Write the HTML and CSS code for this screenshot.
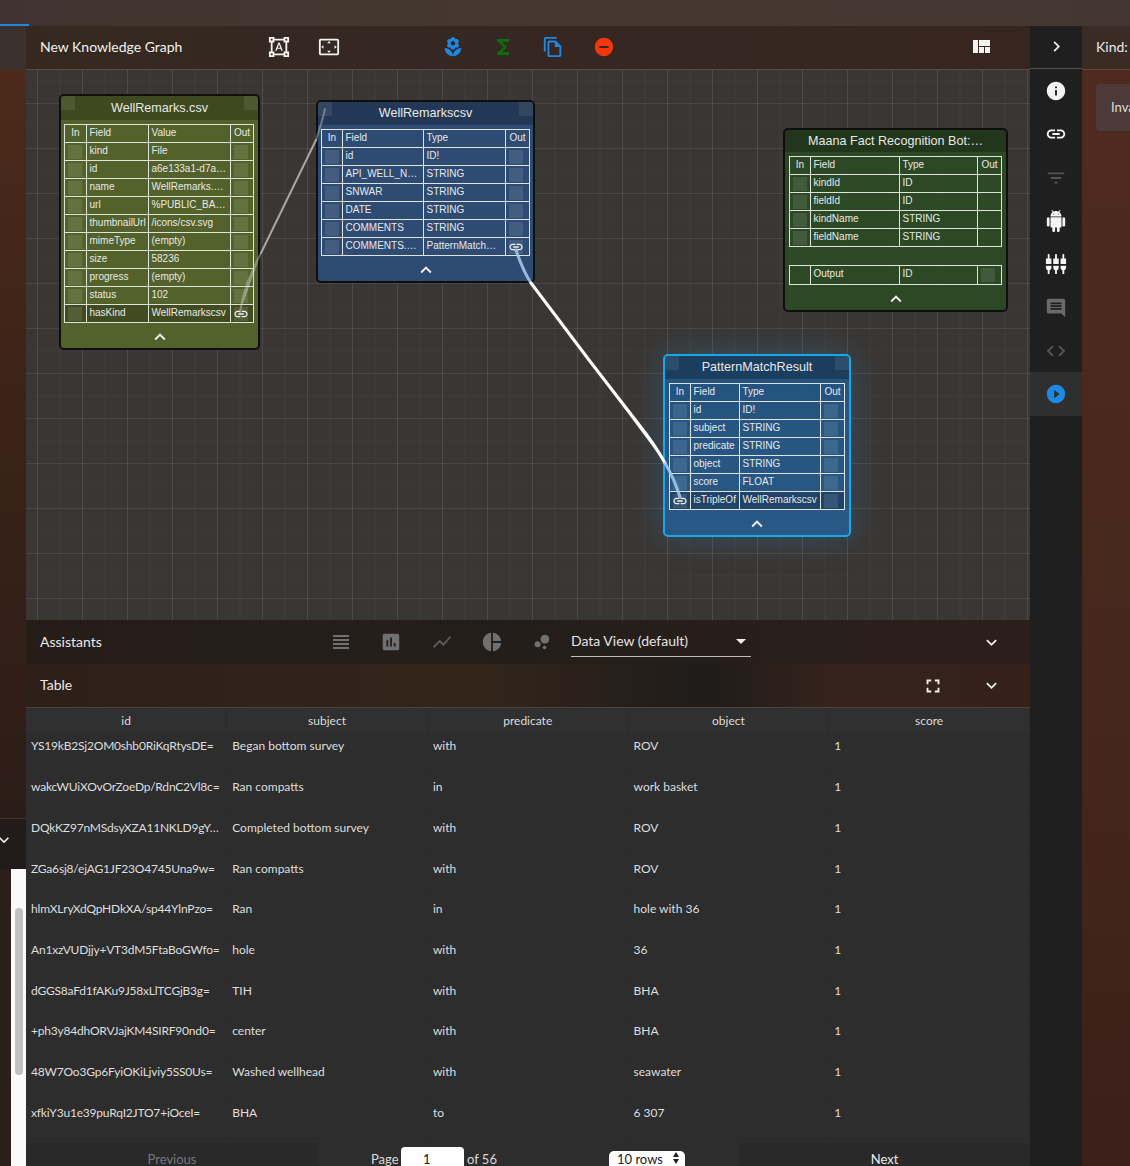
FILE: index.html
```html
<!DOCTYPE html>
<html lang="en">
<head>
    <meta charset="UTF-8">
    <meta name="viewport" content="width=device-width, initial-scale=1.0">
    <title>New Knowledge Graph</title>
    <link rel="stylesheet" href="styles.css">
</head>
<body>
    <svg class="icon-defs" width="0" height="0">
        <symbol id="i-shapes" viewBox="0 0 24 24"><path d="M23 7V1h-6v2H7V1H1v6h2v10H1v6h6v-2h10v2h6v-6h-2V7h2zM3 3h2v2H3V3zm2 18H3v-2h2v2zm12-2H7v-2H5V7h2V5h10v2h2v10h-2v2zm4 2h-2v-2h2v2zM19 5V3h2v2h-2zm-5.27 9h-3.49l-.73 2H7.89l3.4-9h1.4l3.41 9h-1.63l-.74-2zm-3.04-1.26h2.61L12 8.91l-1.31 3.83z"/></symbol>
        <symbol id="i-overscan" viewBox="0 0 24 24"><path d="M12.01 5.5L10 8h4l-1.99-2.5zM18 10v4l2.5-1.99L18 10zM6 10l-2.5 2.01L6 14v-4zm8 6h-4l2.01 2.5L14 16zm7-13H3c-1.1 0-2 .9-2 2v14c0 1.1.9 2 2 2h18c1.1 0 2-.9 2-2V5c0-1.1-.9-2-2-2zm0 16.01H3V4.99h18v14.02z"/></symbol>
        <symbol id="i-florist" viewBox="0 0 24 24"><path d="M12 22c4.97 0 9-4.03 9-9-4.97 0-9 4.03-9 9zM5.6 10.25c0 1.38 1.12 2.5 2.5 2.5.53 0 1.01-.16 1.42-.44l-.02.19c0 1.38 1.12 2.5 2.5 2.5s2.5-1.12 2.5-2.5l-.02-.19c.4.28.89.44 1.42.44 1.38 0 2.5-1.12 2.5-2.5 0-1-.59-1.85-1.43-2.25.84-.4 1.43-1.25 1.43-2.25 0-1.38-1.12-2.5-2.5-2.5-.53 0-1.01.16-1.42.44l.02-.19C14.5 2.12 13.38 1 12 1S9.5 2.12 9.5 3.5l.02.19c-.4-.28-.89-.44-1.42-.44-1.38 0-2.5 1.12-2.5 2.5 0 1 .59 1.85 1.43 2.25-.84.4-1.43 1.25-1.43 2.25zM12 5.5c1.38 0 2.5 1.12 2.5 2.5s-1.12 2.5-2.5 2.5S9.5 9.38 9.5 8s1.12-2.5 2.5-2.5zM3 13c0 4.97 4.03 9 9 9 0-4.97-4.03-9-9-9z"/></symbol>
        <symbol id="i-sigma" viewBox="0 0 24 24"><path d="M18 4H6v2l6.5 6L6 18v2h12v-3h-7l5-5-5-5h7z"/></symbol>
        <symbol id="i-copy" viewBox="0 0 24 24"><path d="M16 1H4c-1.1 0-2 .9-2 2v14h2V3h12V1zm-1 4H8c-1.1 0-1.99.9-1.99 2L6 21c0 1.1.89 2 1.99 2H19c1.1 0 2-.9 2-2V11l-6-6zM8 21V7h6v5h5v9H8z"/></symbol>
        <symbol id="i-remove" viewBox="0 0 24 24"><path d="M12 2C6.48 2 2 6.48 2 12s4.48 10 10 10 10-4.48 10-10S17.52 2 12 2zm5 11H7v-2h10v2z"/></symbol>
        <symbol id="i-quilt" viewBox="0 0 24 24"><path d="M10 18h5v-6h-5v6zm-6 0h5V5H4v13zm12 0h5v-6h-5v6zM10 5v6h11V5H10z"/></symbol>
        <symbol id="i-right" viewBox="0 0 24 24"><path d="M10 6L8.59 7.41 13.17 12l-4.58 4.59L10 18l6-6z"/></symbol>
        <symbol id="i-info" viewBox="0 0 24 24"><path d="M12 2C6.48 2 2 6.48 2 12s4.48 10 10 10 10-4.48 10-10S17.52 2 12 2zm1 15h-2v-6h2v6zm0-8h-2V7h2v2z"/></symbol>
        <symbol id="i-link" viewBox="0 0 24 24"><path d="M3.9 12c0-1.71 1.39-3.1 3.1-3.1h4V7H7c-2.76 0-5 2.24-5 5s2.24 5 5 5h4v-1.9H7c-1.71 0-3.1-1.39-3.1-3.1zM8 13h8v-2H8v2zm9-6h-4v1.9h4c1.71 0 3.1 1.39 3.1 3.1s-1.39 3.1-3.1 3.1h-4V17h4c2.76 0 5-2.24 5-5s-2.24-5-5-5z"/></symbol>
        <symbol id="i-filter" viewBox="0 0 24 24"><path d="M10 18h4v-2h-4v2zM3 6v2h18V6H3zm3 7h12v-2H6v2z"/></symbol>
        <symbol id="i-android" viewBox="0 0 24 24"><path d="M6 18c0 .55.45 1 1 1h1v3.5c0 .83.67 1.5 1.5 1.5s1.5-.67 1.5-1.5V19h2v3.5c0 .83.67 1.5 1.5 1.5s1.5-.67 1.5-1.5V19h1c.55 0 1-.45 1-1V8H6v10zM3.5 8C2.67 8 2 8.67 2 9.5v7c0 .83.67 1.5 1.5 1.5S5 17.33 5 16.5v-7C5 8.67 4.33 8 3.5 8zm17 0c-.83 0-1.5.67-1.5 1.5v7c0 .83.67 1.5 1.5 1.5s1.5-.67 1.5-1.5v-7c0-.83-.67-1.5-1.5-1.5zm-4.97-5.84l1.3-1.3c.2-.2.2-.51 0-.71-.2-.2-.51-.2-.71 0l-1.48 1.48C13.85 1.23 12.95 1 12 1c-.96 0-1.86.23-2.66.63L7.85.15c-.2-.2-.51-.2-.71 0-.2.2-.2.51 0 .71l1.31 1.31C6.97 3.26 6 5.01 6 7h12c0-1.99-.97-3.75-2.47-4.84zM10 5H9V4h1v1zm5 0h-1V4h1v1z"/></symbol>
        <symbol id="i-inputs" viewBox="0 0 24 24"><path d="M5 2c0-.55-.45-1-1-1s-1 .45-1 1v4H1v6h6V6H5V2zm4 14c0 1.3.84 2.4 2 2.82V23h2v-4.18c1.16-.41 2-1.51 2-2.82v-2H9v2zm-8 0c0 1.3.84 2.4 2 2.82V23h2v-4.18C6.16 18.4 7 17.3 7 16v-2H1v2zM21 6V2c0-.55-.45-1-1-1s-1 .45-1 1v4H17v6h6V6h-2zm-8-4c0-.55-.45-1-1-1s-1 .45-1 1v4H9v6h6V6h-2V2zm4 14c0 1.3.84 2.4 2 2.82V23h2v-4.18c1.16-.41 2-1.51 2-2.82v-2h-6v2z"/></symbol>
        <symbol id="i-comment" viewBox="0 0 24 24"><path d="M21.99 4c0-1.1-.89-2-1.99-2H4c-1.1 0-2 .9-2 2v12c0 1.1.9 2 2 2h14l4 4-.01-18zM18 14H6v-2h12v2zm0-3H6V9h12v2zm0-3H6V6h12v2z"/></symbol>
        <symbol id="i-code" viewBox="0 0 24 24"><path d="M9.4 16.6L4.8 12l4.6-4.6L8 6l-6 6 6 6 1.4-1.4zm5.2 0l4.6-4.6-4.6-4.6L16 6l6 6-6 6-1.4-1.4z"/></symbol>
        <symbol id="i-play" viewBox="0 0 24 24"><path d="M12 2C6.48 2 2 6.48 2 12s4.48 10 10 10 10-4.48 10-10S17.52 2 12 2zm-2 14.5v-9l6 4.5-6 4.5z"/></symbol>
        <symbol id="i-headline" viewBox="0 0 24 24"><path d="M4 15h16v-2H4v2zm0 4h16v-2H4v2zm0-8h16V9H4v2zm0-6v2h16V5H4z"/></symbol>
        <symbol id="i-bars" viewBox="0 0 24 24"><path d="M19 3H5c-1.1 0-2 .9-2 2v14c0 1.1.9 2 2 2h14c1.1 0 2-.9 2-2V5c0-1.1-.9-2-2-2zM9 17H7v-7h2v7zm4 0h-2V7h2v10zm4 0h-2v-4h2v4z"/></symbol>
        <symbol id="i-line" viewBox="0 0 24 24"><path d="M3.5 18.49l6-6.01 4 4L22 6.92l-1.41-1.41-7.09 7.97-4-4L2 16.99z"/></symbol>
        <symbol id="i-pie" viewBox="0 0 24 24"><path d="M11 2v20c-5.07-.5-9-4.79-9-10s3.93-9.5 9-10zm2.03 0v8.99H22c-.47-4.74-4.24-8.52-8.97-8.99zm0 11.01V22c4.74-.47 8.5-4.25 8.97-8.99h-8.97z"/></symbol>
        <symbol id="i-bubble" viewBox="0 0 24 24"><circle cx="7.2" cy="14.4" r="3.2"/><circle cx="14.8" cy="18" r="2"/><circle cx="15.2" cy="8.8" r="4.8"/></symbol>
        <symbol id="i-full" viewBox="0 0 24 24"><path d="M7 14H5v5h5v-2H7v-3zm-2-4h2V7h3V5H5v5zm12 7h-3v2h5v-5h-2v3zM14 5v2h3v3h2V5h-5z"/></symbol>
        <symbol id="i-down" viewBox="0 0 24 24"><path d="M16.59 8.59L12 13.17 7.41 8.59 6 10l6 6 6-6z"/></symbol>
        <symbol id="i-up" viewBox="0 0 24 24"><path d="M12 8l-6 6 1.41 1.41L12 10.83l4.59 4.58L18 14z"/></symbol>
    </svg>

    <div class="topbar"><div class="topbar-tab"></div></div>

    <div class="app">
        <aside class="left-strip">
            <div class="left-head"></div>
            <div class="left-brown"></div>
            <div class="left-band"><svg class="left-chevron"><use href="#i-down"/></svg></div>
            <div class="left-scroll"><div class="left-thumb"></div></div>
        </aside>

        <main class="main">
            <header class="graph-head">
                <div class="graph-title">New Knowledge Graph</div>
                <div class="btn-group">
                    <span class="icon-btn"><svg><use href="#i-shapes"/></svg></span>
                    <span class="icon-btn"><svg><use href="#i-overscan"/></svg></span>
                </div>
                <div class="btn-group group-actions">
                    <span class="icon-btn blue"><svg><use href="#i-florist"/></svg></span>
                    <span class="icon-btn green"><svg><use href="#i-sigma"/></svg></span>
                    <span class="icon-btn blue"><svg><use href="#i-copy"/></svg></span>
                    <span class="icon-btn red"><svg><use href="#i-remove"/></svg></span>
                </div>
                <div class="btn-group group-layout">
                    <span class="icon-btn"><svg><use href="#i-quilt"/></svg></span>
                </div>
            </header>

            <section class="canvas">
                <div class="node node-file">
                    <div class="node-title"><span class="corner corner-l"></span>WellRemarks.csv<span class="corner corner-r"></span></div>
                    <table class="fields">
                        <colgroup><col class="c1"><col class="c2"><col class="c3"><col class="c4"></colgroup>
                        <tr><th class="center">In</th><th>Field</th><th>Value</th><th class="center">Out</th></tr>
                        <tr><td><i class="port"></i></td><td>kind</td><td>File</td><td><i class="port"></i></td></tr>
                        <tr><td><i class="port"></i></td><td>id</td><td>a6e133a1-d7a…</td><td><i class="port"></i></td></tr>
                        <tr><td><i class="port"></i></td><td>name</td><td>WellRemarks.…</td><td><i class="port"></i></td></tr>
                        <tr><td><i class="port"></i></td><td>url</td><td>%PUBLIC_BA…</td><td><i class="port"></i></td></tr>
                        <tr><td><i class="port"></i></td><td>thumbnailUrl</td><td>/icons/csv.svg</td><td><i class="port"></i></td></tr>
                        <tr><td><i class="port"></i></td><td>mimeType</td><td>(empty)</td><td><i class="port"></i></td></tr>
                        <tr><td><i class="port"></i></td><td>size</td><td>58236</td><td><i class="port"></i></td></tr>
                        <tr><td><i class="port"></i></td><td>progress</td><td>(empty)</td><td><i class="port"></i></td></tr>
                        <tr><td><i class="port"></i></td><td>status</td><td>102</td><td><i class="port"></i></td></tr>
                        <tr class="linked"><td><i class="port"></i></td><td>hasKind</td><td>WellRemarkscsv</td><td><i class="port"><svg><use href="#i-link"/></svg></i></td></tr>
                    </table>
                    <div class="node-foot"><svg><use href="#i-up"/></svg></div>
                </div>

                <div class="node node-kind">
                    <div class="node-title"><span class="corner corner-l"></span>WellRemarkscsv<span class="corner corner-r"></span></div>
                    <table class="fields">
                        <colgroup><col class="c1"><col class="c2"><col class="c3"><col class="c4"></colgroup>
                        <tr><th class="center">In</th><th>Field</th><th>Type</th><th class="center">Out</th></tr>
                        <tr><td><i class="port"></i></td><td>id</td><td>ID!</td><td><i class="port"></i></td></tr>
                        <tr><td><i class="port"></i></td><td>API_WELL_N…</td><td>STRING</td><td><i class="port"></i></td></tr>
                        <tr><td><i class="port"></i></td><td>SNWAR</td><td>STRING</td><td><i class="port"></i></td></tr>
                        <tr><td><i class="port"></i></td><td>DATE</td><td>STRING</td><td><i class="port"></i></td></tr>
                        <tr><td><i class="port"></i></td><td>COMMENTS</td><td>STRING</td><td><i class="port"></i></td></tr>
                        <tr><td><i class="port"></i></td><td>COMMENTS.…</td><td>PatternMatch…</td><td><i class="port"><svg><use href="#i-link"/></svg></i></td></tr>
                    </table>
                    <div class="node-foot"><svg><use href="#i-up"/></svg></div>
                </div>

                <div class="node node-bot">
                    <div class="node-title">Maana Fact Recognition Bot:…</div>
                    <table class="fields">
                        <colgroup><col class="c1"><col class="c2"><col class="c3"><col class="c4"></colgroup>
                        <tr><th class="center">In</th><th>Field</th><th>Type</th><th class="center">Out</th></tr>
                        <tr><td><i class="port"></i></td><td>kindId</td><td>ID</td><td></td></tr>
                        <tr><td><i class="port"></i></td><td>fieldId</td><td>ID</td><td></td></tr>
                        <tr><td><i class="port"></i></td><td>kindName</td><td>STRING</td><td></td></tr>
                        <tr><td><i class="port"></i></td><td>fieldName</td><td>STRING</td><td></td></tr>
                    </table>
                    <table class="fields fields-output">
                        <colgroup><col class="c1"><col class="c2"><col class="c3"><col class="c4"></colgroup>
                        <tr><td></td><td>Output</td><td>ID</td><td><i class="port"></i></td></tr>
                    </table>
                    <div class="node-foot"><svg><use href="#i-up"/></svg></div>
                </div>

                <div class="node node-result">
                    <div class="node-title"><span class="corner corner-l"></span>PatternMatchResult<span class="corner corner-r"></span></div>
                    <table class="fields">
                        <colgroup><col class="c1"><col class="c2"><col class="c3"><col class="c4"></colgroup>
                        <tr><th class="center">In</th><th>Field</th><th>Type</th><th class="center">Out</th></tr>
                        <tr><td><i class="port"></i></td><td>id</td><td>ID!</td><td><i class="port"></i></td></tr>
                        <tr><td><i class="port"></i></td><td>subject</td><td>STRING</td><td><i class="port"></i></td></tr>
                        <tr><td><i class="port"></i></td><td>predicate</td><td>STRING</td><td><i class="port"></i></td></tr>
                        <tr><td><i class="port"></i></td><td>object</td><td>STRING</td><td><i class="port"></i></td></tr>
                        <tr><td><i class="port"></i></td><td>score</td><td>FLOAT</td><td><i class="port"></i></td></tr>
                        <tr class="linked"><td><i class="port"><svg><use href="#i-link"/></svg></i></td><td>isTripleOf</td><td>WellRemarkscsv</td><td><i class="port"></i></td></tr>
                    </table>
                    <div class="node-foot"><svg><use href="#i-up"/></svg></div>
                </div>

                <svg class="edges" width="1004" height="550" viewBox="26 70 1004 550" fill="none">
                    <path class="edge-grey-dim" d="M240 312C243 292 248 278 261 253"/>
                    <path class="edge-grey" d="M261 253L316 140"/>
                    <path class="edge-grey-dim" d="M316 140C320 128 323 118 325 109"/>
                    <path class="edge-blue-dim" d="M516 250C520 262 525 274 531 283"/>
                    <path class="edge-white" d="M531 283L589 360L640 426Q655 445 665 463"/>
                    <path class="edge-blue-dim" d="M665 463Q674 478 680 497"/>
                </svg>
            </section>

            <section class="bar bar-assist">
                <div class="bar-label">Assistants</div>
                <div class="btn-group group-views">
                    <span class="icon-btn grey"><svg><use href="#i-headline"/></svg></span>
                    <span class="icon-btn grey"><svg><use href="#i-bars"/></svg></span>
                    <span class="icon-btn dim"><svg><use href="#i-line"/></svg></span>
                    <span class="icon-btn grey"><svg><use href="#i-pie"/></svg></span>
                    <span class="icon-btn grey"><svg><use href="#i-bubble"/></svg></span>
                </div>
                <div class="view-select">Data View (default)<span class="caret"></span></div>
                <span class="icon-btn bar-end"><svg><use href="#i-down"/></svg></span>
            </section>

            <section class="bar bar-table">
                <div class="bar-label">Table</div>
                <span class="icon-btn bar-full"><svg><use href="#i-full"/></svg></span>
                <span class="icon-btn bar-end"><svg><use href="#i-down"/></svg></span>
            </section>

            <section class="results">
                <table class="data">
                    <thead>
                        <tr><th>id</th><th>subject</th><th>predicate</th><th>object</th><th>score</th></tr>
                    </thead>
                    <tbody>
                        <tr><td>YS19kB2Sj2OM0shb0RiKqRtysDE=</td><td>Began bottom survey</td><td>with</td><td>ROV</td><td>1</td></tr>
                        <tr><td>wakcWUiXOvOrZoeDp/RdnC2Vl8c=</td><td>Ran compatts</td><td>in</td><td>work basket</td><td>1</td></tr>
                        <tr><td>DQkKZ97nMSdsyXZA11NKLD9gY…</td><td>Completed bottom survey</td><td>with</td><td>ROV</td><td>1</td></tr>
                        <tr><td>ZGa6sj8/ejAG1JF23O4745Una9w=</td><td>Ran compatts</td><td>with</td><td>ROV</td><td>1</td></tr>
                        <tr><td>hlmXLryXdQpHDkXA/sp44YlnPzo=</td><td>Ran</td><td>in</td><td>hole with 36</td><td>1</td></tr>
                        <tr><td>An1xzVUDjjy+VT3dM5FtaBoGWfo=</td><td>hole</td><td>with</td><td>36</td><td>1</td></tr>
                        <tr><td>dGGS8aFd1fAKu9J58xLlTCGjB3g=</td><td>TIH</td><td>with</td><td>BHA</td><td>1</td></tr>
                        <tr><td>+ph3y84dhORVJajKM4SIRF90nd0=</td><td>center</td><td>with</td><td>BHA</td><td>1</td></tr>
                        <tr><td>48W7Oo3Gp6FyiOKiLjviy5SS0Us=</td><td>Washed wellhead</td><td>with</td><td>seawater</td><td>1</td></tr>
                        <tr><td>xfkiY3u1e39puRqI2JTO7+iOceI=</td><td>BHA</td><td>to</td><td>6 307</td><td>1</td></tr>
                    </tbody>
                </table>
                <div class="pager">
                    <div class="pager-btn pager-prev">Previous</div>
                    <div class="pager-mid">
                        <span class="pager-page">Page</span>
                        <span class="pager-input">1</span>
                        <span class="pager-of">of 56</span>
                        <span class="pager-rows">10 rows<span class="updown"></span></span>
                    </div>
                    <div class="pager-btn">Next</div>
                </div>
            </section>
        </main>

        <nav class="rail">
            <div class="rail-head"><svg><use href="#i-right"/></svg></div>
            <span class="rail-item"><svg><use href="#i-info"/></svg></span>
            <span class="rail-item"><svg><use href="#i-link"/></svg></span>
            <span class="rail-item off"><svg><use href="#i-filter"/></svg></span>
            <span class="rail-item"><svg><use href="#i-android"/></svg></span>
            <span class="rail-item"><svg><use href="#i-inputs"/></svg></span>
            <span class="rail-item mid"><svg><use href="#i-comment"/></svg></span>
            <span class="rail-item off"><svg><use href="#i-code"/></svg></span>
            <span class="rail-item active"><svg><use href="#i-play"/></svg></span>
        </nav>

        <aside class="details">
            <div class="details-head">Kind:</div>
            <div class="details-card">Inva</div>
        </aside>
    </div>
</body>
</html>
```
FILE: styles.css
```css
* {
    box-sizing: border-box;
}
html, body {
    margin: 0;
    height: 1166px;
    overflow: hidden;
}
body {
    font-family: Lato, "Noto Sans", sans-serif;
    color: #e6e6e6;
    background: #2a1f1b;
}
.icon-defs {
    position: absolute;
}
svg {
    fill: currentColor;
}
.topbar {
    height: 26px;
    background: linear-gradient(to right, #3f3430, #46382f 50%, #443632);
}
.topbar-tab {
    width: 29px;
    height: 26px;
    border-bottom: 2px solid #1e88e5;
}
.app {
    display: grid;
    grid-template-columns: 26px 1004px 52px 48px;
    height: 1140px;
}

/* left strip */
.left-strip {
    display: flex;
    flex-direction: column;
    overflow: hidden;
}
.left-head {
    height: 44px;
    background: #3a302c;
}
.left-brown {
    height: 748px;
    background: linear-gradient(to bottom, #4d2a1b, #3d2418 40%, #2c1c17);
}
.left-band {
    height: 51px;
    background: #211c1a;
    border-top: 1px solid #3a3330;
}
.left-chevron {
    width: 20px;
    height: 20px;
    margin: 11px 0 0 -6px;
    color: #eee;
}
.left-scroll {
    flex: 1;
    margin-left: 11px;
    width: 15px;
    padding: 39px 3px 0 4px;
    background: #fafafa;
}
.left-thumb {
    height: 167px;
    background: #c1c1c1;
    border-radius: 4px;
}

/* main column */
.main {
    display: flex;
    flex-direction: column;
    min-width: 0;
}
.graph-head {
    display: flex;
    height: 44px;
    padding-bottom: 1px;
    align-items: center;
    background: linear-gradient(to right, #35291f, #352723 40%, #37261f);
    border-bottom: 1px solid #5a4a42;
}
.graph-title {
    width: 228px;
    padding: 0 0 2px 14px;
    font-size: 14px;
    color: #f0f0f0;
}
.btn-group {
    display: flex;
}
.group-actions {
    margin-left: 73px;
}
.group-layout {
    margin-left: 327.5px;
}
.icon-btn {
    display: flex;
    width: 50.3px;
    height: 24px;
    align-items: center;
    justify-content: center;
    color: #f2f2f2;
}
.icon-btn svg {
    width: 22px;
    height: 22px;
}
.icon-btn.green svg, .group-layout svg, .group-views .grey:first-child svg {
    width: 24px;
    height: 24px;
}
.blue { color: #1e88e5; }
.green { color: #0b6e0b; }
.red { color: #f4360f; }
.grey { color: #707070; }
.dim { color: #5a5a5a; }

/* graph canvas */
.canvas {
    position: relative;
    height: 550px;
    background-color: #3a3633;
    background-image:
        linear-gradient(to right, rgba(255,255,255,0.1) 1px, transparent 1px),
        linear-gradient(to bottom, rgba(255,255,255,0.08) 1px, transparent 1px),
        linear-gradient(to right, rgba(255,255,255,0.035) 1px, transparent 1px),
        linear-gradient(to bottom, rgba(255,255,255,0.025) 1px, transparent 1px);
    background-size: 45px 45px;
    background-position: 11px 33px, 11px 33px, 33.5px 10.5px, 33.5px 10.5px;
    overflow: hidden;
}
.node {
    position: absolute;
    display: flex;
    flex-direction: column;
    border: 2px solid #0f0f0f;
    border-radius: 5px;
    font-family: "Liberation Sans", Arial, sans-serif;
    color: #e8e8e8;
}
.node-file {
    left: 33px;
    top: 24px;
    width: 201px;
    height: 256px;
    padding: 0 3px;
    background: rgba(84, 100, 42, 0.96);
}
.node-kind {
    left: 290px;
    top: 30px;
    width: 219px;
    height: 183px;
    padding: 0 3px;
    background: rgba(46, 76, 118, 0.96);
}
.node-bot {
    left: 757px;
    top: 58px;
    width: 225px;
    height: 184px;
    padding: 0 4px;
    background: rgba(43, 74, 37, 0.95);
}
.node-result {
    left: 637px;
    top: 284px;
    width: 188px;
    height: 183px;
    padding: 0 4px;
    background: linear-gradient(to bottom, rgba(34, 84, 130, 0.95), rgba(42, 90, 138, 0.96));
    border-color: #17a8ea;
    box-shadow: 0 0 34px rgba(40, 150, 230, 0.28);
}
.node-title {
    position: relative;
    height: 23px;
    margin: 0 -3px 4px;
    padding: 0 18px;
    font-size: 12.6px;
    line-height: 23px;
    text-align: center;
    white-space: nowrap;
    overflow: hidden;
    background: rgba(0, 0, 0, 0.25);
}
.node-file .node-title {
    height: 24px;
    line-height: 24px;
}
.node-bot .node-title {
    margin: 0 -4px 4px;
    padding: 0 20px;
}
.node-result .node-title {
    margin: 0 -4px 4px;
}
.corner {
    position: absolute;
    top: 0;
    width: 14px;
    height: 14px;
    background: rgba(255, 255, 255, 0.08);
}
.corner-l { left: 0; }
.corner-r { right: 0; }
.fields {
    table-layout: fixed;
    border-collapse: collapse;
    font-size: 10px;
}
.node-file .fields { width: 189px; }
.node-kind .fields { width: 208px; }
.node-bot .fields { width: 212px; }
.node-result .fields { width: 175px; }
.fields th, .fields td {
    height: 18px;
    padding: 0 0 2px 2.5px;
    border: 1px solid #dfe3dc;
    font-weight: normal;
    text-align: left;
    white-space: nowrap;
    overflow: hidden;
}
.fields .center {
    padding: 0 0 2px;
    text-align: center;
}
.fields td:first-child, .fields td:last-child {
    padding: 0 0 0 3px;
}
.fields-output {
    margin-top: 18px;
}
.fields-output td {
    height: 19px;
    padding-bottom: 3px;
}
.port {
    position: relative;
    display: block;
    width: 14px;
    height: 14px;
    background: rgba(255, 255, 255, 0.1);
}
.port svg {
    position: absolute;
    left: -1px;
    top: -1px;
    width: 16px;
    height: 16px;
    color: #f0f0f0;
}
.linked td {
    background: rgba(0, 0, 0, 0.22);
}
.node-file .c1 { width: 22px; }
.node-file .c2 { width: 62px; }
.node-file .c3 { width: 82px; }
.node-file .c4 { width: 23px; }
.node-kind .c1 { width: 21px; }
.node-kind .c2 { width: 81px; }
.node-kind .c3 { width: 82px; }
.node-kind .c4 { width: 24px; }
.node-bot .c1 { width: 21px; }
.node-bot .c2 { width: 89px; }
.node-bot .c3 { width: 78px; }
.node-bot .c4 { width: 24px; }
.node-result .c1 { width: 21px; }
.node-result .c2 { width: 49px; }
.node-result .c3 { width: 81px; }
.node-result .c4 { width: 24px; }
.node-foot {
    display: flex;
    flex: 1;
    align-items: center;
    justify-content: center;
    padding-top: 3px;
    color: #f2f2f2;
}
.node-foot svg {
    width: 22px;
    height: 22px;
}
.edges {
    position: absolute;
    left: 0;
    top: 0;
    pointer-events: none;
}
.edges path {
    stroke-linecap: round;
}
.edge-grey {
    stroke: #a9a5a1;
    stroke-width: 2;
}
.edge-grey-dim {
    stroke: #c4c7c0;
    stroke-width: 2;
    opacity: 0.45;
}
.edge-white {
    stroke: #fff;
    stroke-width: 3;
}
.edge-blue-dim {
    stroke: #a9cdf5;
    stroke-width: 3;
    opacity: 0.85;
}

/* assistants and table bars */
.bar {
    position: relative;
    display: flex;
    height: 44px;
    align-items: center;
    font-size: 14px;
}
.bar-assist {
    background: linear-gradient(to right, #261d19, #241e1b 50%, #2c1f1b);
}
.bar-table {
    background: linear-gradient(to right, #2e2018, #33251a 45%, #1f1c1a 68%, #35231b 80%, #35211a);
    border-bottom: 1px solid #4a423d;
}
.bar-label {
    width: 290px;
    padding: 0 0 2px 14px;
    color: #eaeaea;
}
.bar-table .bar-label {
    width: 882px;
}
.bar-end {
    margin-left: auto;
    margin-right: 13.7px;
}
.bar-end svg {
    width: 21px;
    height: 21px;
}
.view-select {
    position: relative;
    width: 180px;
    height: 30px;
    margin-left: 3.5px;
    padding-top: 5px;
    color: #e4e4e4;
    border-bottom: 1px solid #bdbdbd;
}
.caret {
    position: absolute;
    right: 5px;
    top: 12px;
    border-left: 5px solid transparent;
    border-right: 5px solid transparent;
    border-top: 5px solid #eee;
}

/* results table */
.results {
    flex: 1;
    background: #2d2d2d;
    overflow: hidden;
}
.data {
    width: 100%;
    table-layout: fixed;
    border-collapse: collapse;
    font-size: 12px;
}
.data th {
    height: 25px;
    padding-bottom: 2px;
    font-weight: normal;
    text-align: center;
    color: #dcdcdc;
    background: #303030;
    border-right: 1px solid #2b2b2b;
}
.data td {
    height: 40.7px;
    padding: 5px 5px 0;
    vertical-align: top;
    color: #dedede;
    white-space: nowrap;
    overflow: hidden;
    border-right: 1px solid #2b2b2b;
    border-bottom: 1px solid #2b2b2b;
}
.data td:first-child {
    letter-spacing: -0.2px;
}
.pager {
    display: grid;
    grid-template-columns: 292px 1fr 291px;
    padding-top: 3px;
    font-size: 13px;
}
.pager-btn {
    height: 36px;
    padding-top: 8px;
    text-align: center;
    color: #ececec;
    background: #292929;
}
.pager-prev {
    color: #777;
}
.pager-mid {
    display: flex;
    align-items: flex-start;
    color: #d8d8d8;
}
.pager-page {
    width: 83px;
    margin-top: 8px;
    padding-left: 53px;
}
.pager-input {
    width: 63px;
    height: 30px;
    margin-top: 4px;
    padding: 4px 0 0 22px;
    color: #222;
    background: #fff;
    border-radius: 4px;
}
.pager-of {
    width: 145px;
    margin-top: 8px;
    padding-left: 3px;
}
.pager-rows {
    position: relative;
    width: 76px;
    height: 30px;
    margin-top: 8px;
    padding: 0 0 0 8px;
    line-height: 16px;
    color: #222;
    background: #fff;
    border-radius: 5px;
}
.updown {
    position: absolute;
    right: 6px;
    top: 1px;
    border-left: 3.5px solid transparent;
    border-right: 3.5px solid transparent;
    border-bottom: 5px solid #222;
}
.updown::after {
    content: "";
    position: absolute;
    left: -3.5px;
    top: 7px;
    border-left: 3.5px solid transparent;
    border-right: 3.5px solid transparent;
    border-top: 5px solid #222;
}

/* right icon rail */
.rail {
    display: flex;
    flex-direction: column;
    background: #1f1f1f;
}
.rail-head {
    display: flex;
    height: 43.4px;
    padding-bottom: 1px;
    flex: none;
    align-items: center;
    justify-content: center;
    color: #f2f2f2;
    border-bottom: 1px solid #55504c;
}
.rail-head svg {
    width: 21px;
    height: 21px;
}
.rail-item svg {
    width: 22px;
    height: 22px;
}
.rail-item {
    display: flex;
    height: 43.3px;
    flex: none;
    align-items: center;
    justify-content: center;
    color: #f4f4f4;
}
.rail-item.off {
    color: #555;
}
.rail-item.mid {
    color: #6a6a6a;
}
.rail-item.active {
    color: #1e88e5;
    background: #2f2f2f;
}

/* right details panel, cut off by the window */
.details {
    min-width: 0;
    overflow: hidden;
    background: linear-gradient(to bottom, #4f2a20, #47271d 55%, #3a2019);
    white-space: nowrap;
}
.details-head {
    height: 44px;
    padding-left: 14px;
    font-size: 14px;
    line-height: 41px;
    color: #eaeaea;
    background: #3a2b25;
    border-bottom: 1px solid #5a4a42;
}
.details-card {
    height: 47px;
    margin: 14px 0 0 14px;
    padding-left: 15px;
    font-size: 13px;
    line-height: 47px;
    color: #dcdcdc;
    background: #4b3a37;
    border-radius: 4px 0 0 4px;
}
```
